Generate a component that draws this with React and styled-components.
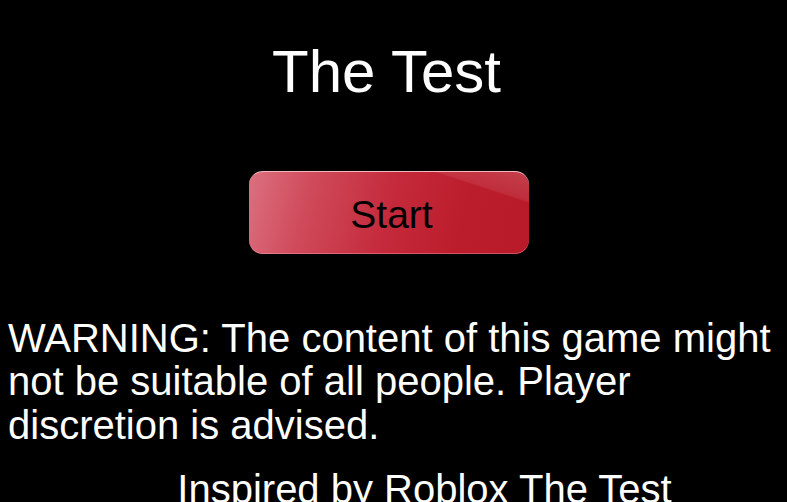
import React from "react";
import styled, { createGlobalStyle } from "styled-components";

const GlobalStyle = createGlobalStyle`
  html, body {
    margin: 0;
    padding: 0;
    background: #000;
    overflow: hidden;
  }
  body {
    font-family: "Liberation Sans", Arial, sans-serif;
    color: #fff;
  }
`;

const Screen = styled.main`
  width: 787px;
  height: 502px;
  box-sizing: border-box;
  padding: 0 8px;
  display: flex;
  flex-direction: column;
  overflow: hidden;
`;

const Hero = styled.section`
  display: flex;
  flex-direction: column;
  align-items: center;
  gap: 64px;
  padding-right: 10px;
  margin-top: 38px;
`;

const Title = styled.h1`
  margin: 0 4px 0 0;
  font-size: 60px;
  font-weight: 400;
  line-height: 1.149;
`;

const StartButton = styled.button`
  width: 280px;
  height: 83px;
  box-sizing: border-box;
  padding: 5px 0 0 6px;
  border: none;
  border-top: 1px solid #f1b8c0;
  border-radius: 14px;
  background:
    linear-gradient(198deg, rgba(255, 255, 255, 0.16) 0%, rgba(255, 255, 255, 0.08) 17%, rgba(255, 255, 255, 0) 18%),
    linear-gradient(104deg, #dc7080 0%, #cf4a5a 22%, #c42a3b 50%, #bc1d2c 75%, #b81a29 100%);
  box-shadow: inset 0 -1px 0 rgba(255, 190, 200, 0.35);
  color: #000;
  font-family: "Liberation Sans", Arial, sans-serif;
  font-size: 39px;
  cursor: pointer;
`;

const Text = styled.p`
  margin: ${(p) => p.$top}px 0 0;
  font-size: 40px;
  line-height: 43.5px;
  text-align: ${(p) => (p.$center ? "center" : "left")};
  padding-left: ${(p) => (p.$center ? 62 : 0)}px;
  white-space: ${(p) => (p.$center ? "nowrap" : "normal")};
`;

export default function App() {
  return (
    <>
      <GlobalStyle />
      <Screen>
        <Hero>
          <Title>The Test</Title>
          <StartButton>Start</StartButton>
        </Hero>
        <Text $top={63}>
          WARNING: The content of this game might not be suitable of all people. Player discretion is advised.
        </Text>
        <Text $top={21} $center>
          Inspired by Roblox The Test
        </Text>
      </Screen>
    </>
  );
}
